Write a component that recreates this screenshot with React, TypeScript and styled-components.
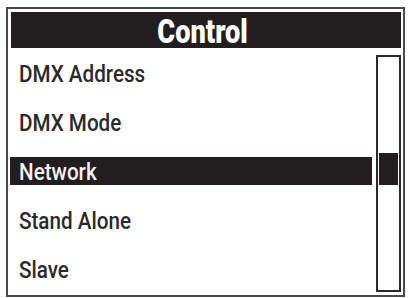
import React from "react";
import styled, { createGlobalStyle } from "styled-components";

const Global = createGlobalStyle`
  html, body { margin: 0; padding: 0; background: #ffffff; }
  body { width: 409px; height: 298px; overflow: hidden; font-family: Roboto, "Liberation Sans", sans-serif; }
`;

const Screen = styled.div`
  box-sizing: border-box;
  width: 409px;
  height: 298px;
  padding: 7px 4px 1px 6px;
  background: #ffffff;
`;

const Frame = styled.div`
  box-sizing: border-box;
  height: 100%;
  border: 2px solid #4a4a4a;
  padding: 3px 2px 2px 2px;
  display: flex;
  flex-direction: column;
`;

const Header = styled.div`
  box-sizing: border-box;
  height: 36px;
  margin-left: 1px;
  background: #221e1f;
  display: flex;
  justify-content: center;
  padding-top: 3px;
  padding-right: 6px;
`;

const Title = styled.span`
  display: inline-block;
  color: #ffffff;
  font-family: Roboto, "Liberation Sans", sans-serif;
  font-weight: 900;
  font-size: 34px;
  line-height: 33px;
  transform: scaleX(0.8);
  transform-origin: center;
`;

const Body = styled.div`
  flex: 1;
  display: flex;
  min-height: 0;
`;

const List = styled.div`
  flex: 1;
  display: flex;
  flex-direction: column;
`;

const Row = styled.div`
  height: 49px;
  box-sizing: border-box;
  padding: 11px 4px 0 0;
`;

const Label = styled.div<{ $active?: boolean }>`
  box-sizing: border-box;
  height: 28px;
  padding: 3px 0 0 9px;
  line-height: 25px;
  background: ${(p) => (p.$active ? "#221e1f" : "transparent")};
  color: ${(p) => (p.$active ? "#f2f2f2" : "#2a2a2a")};
  white-space: nowrap;
`;

const LabelText = styled.span`
  display: inline-block;
  font-family: Roboto, "Liberation Sans", sans-serif;
  font-weight: 500;
  font-size: 24px;
  transform: scaleX(0.86);
  transform-origin: left center;
`;

const Track = styled.div`
  box-sizing: border-box;
  width: 25px;
  margin: 7px 0 1px 0;
  border: 2px solid #2a2a2a;
  padding: 96px 1px 0 1px;
`;

const Thumb = styled.div`
  height: 32px;
  background: #221e1f;
`;

const items = ["DMX Address", "DMX Mode", "Network", "Stand Alone", "Slave"];

export default function App() {
  return (
    <>
      <Global />
      <Screen>
        <Frame>
          <Header>
            <Title>Control</Title>
          </Header>
          <Body>
            <List>
              {items.map((it, i) => (
                <Row key={it}>
                  <Label $active={i === 2}>
                    <LabelText>{it}</LabelText>
                  </Label>
                </Row>
              ))}
            </List>
            <Track>
              <Thumb />
            </Track>
          </Body>
        </Frame>
      </Screen>
    </>
  );
}
